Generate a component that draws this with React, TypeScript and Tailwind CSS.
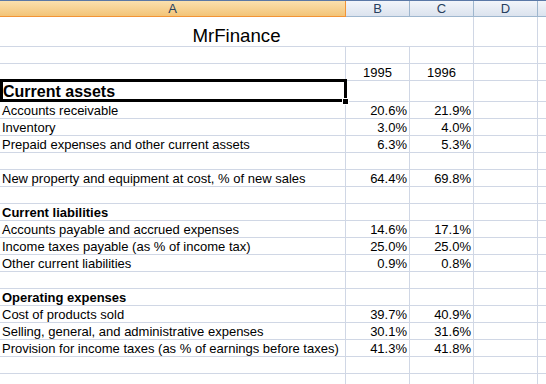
import React from "react";

type R = { a?: string; b?: string; c?: string; bold?: boolean };

const rows: R[] = [
  { a: "Accounts receivable", b: "20.6%", c: "21.9%" },
  { a: "Inventory", b: "3.0%", c: "4.0%" },
  { a: "Prepaid expenses and other current assets", b: "6.3%", c: "5.3%" },
  {},
  { a: "New property and equipment at cost, % of new sales", b: "64.4%", c: "69.8%" },
  {},
  { a: "Current liabilities", bold: true },
  { a: "Accounts payable and accrued expenses", b: "14.6%", c: "17.1%" },
  { a: "Income taxes payable (as % of income tax)", b: "25.0%", c: "25.0%" },
  { a: "Other current liabilities", b: "0.9%", c: "0.8%" },
  {},
  { a: "Operating expenses", bold: true },
  { a: "Cost of products sold", b: "39.7%", c: "40.9%" },
  { a: "Selling, general, and administrative expenses", b: "30.1%", c: "31.6%" },
  { a: "Provision for income taxes (as % of earnings before taxes)", b: "41.3%", c: "41.8%" },
  {},
  {},
];

function DataRow({ r }: { r: R }) {
  return (
    <div className="flex h-[17px] border-b border-[#d0d7e5]">
      <div className={"w-[346px] shrink-0 border-r border-[#d0d7e5] flex items-end pl-[2px] whitespace-nowrap overflow-hidden leading-[15px] " + (r.bold ? "font-bold" : "")}>
        {r.a}
      </div>
      <div className="w-[64px] shrink-0 border-r border-[#d0d7e5] flex items-end justify-end pr-[2px] leading-[15px]">{r.b}</div>
      <div className="w-[64px] shrink-0 border-r border-[#d0d7e5] flex items-end justify-end pr-[2px] leading-[15px]">{r.c}</div>
      <div className="w-[64px] shrink-0 border-r border-[#d0d7e5]" />
      <div className="flex-1" />
    </div>
  );
}

export default function App() {
  return (
    <div className="relative w-[546px] h-[384px] overflow-hidden bg-white text-black text-[13px] font-['Liberation_Sans',Arial,sans-serif]">
      {/* Column headers */}
      <div className="flex h-[17px] border-t border-[#5a78a6] text-[#27405e]">
        <div className="w-[346px] shrink-0 flex items-center justify-center border-r border-b border-[#f29436] bg-linear-to-b from-[#fae0ae] to-[#f3c477] leading-[15px]">A</div>
        <div className="w-[64px] shrink-0 flex items-center justify-center border-r border-b border-[#9eb6ce] bg-linear-to-b from-[#f2f5fa] to-[#dbe3ee] leading-[15px]">B</div>
        <div className="w-[64px] shrink-0 flex items-center justify-center border-r border-b border-[#9eb6ce] bg-linear-to-b from-[#f2f5fa] to-[#dbe3ee] leading-[15px]">C</div>
        <div className="w-[64px] shrink-0 flex items-center justify-center border-r border-b border-[#9eb6ce] bg-linear-to-b from-[#f2f5fa] to-[#dbe3ee] leading-[15px]">D</div>
        <div className="flex-1 border-b border-[#9eb6ce] bg-linear-to-b from-[#f2f5fa] to-[#dbe3ee]" />
      </div>

      {/* Title row (merged A:C) */}
      <div className="flex h-[30px] border-b border-[#d0d7e5]">
        <div className="w-[474px] shrink-0 border-r border-[#d0d7e5] flex items-end justify-center text-[18.67px] leading-[20px]">MrFinance</div>
        <div className="w-[64px] shrink-0 border-r border-[#d0d7e5]" />
        <div className="flex-1" />
      </div>

      {/* Empty row */}
      <DataRow r={{}} />

      {/* Years row */}
      <div className="flex h-[17px] border-b border-[#d0d7e5]">
        <div className="w-[346px] shrink-0 border-r border-[#d0d7e5]" />
        <div className="w-[64px] shrink-0 border-r border-[#d0d7e5] flex items-end justify-center leading-[15px]">1995</div>
        <div className="w-[64px] shrink-0 border-r border-[#d0d7e5] flex items-end justify-center leading-[15px]">1996</div>
        <div className="w-[64px] shrink-0 border-r border-[#d0d7e5]" />
        <div className="flex-1" />
      </div>

      {/* Current assets row */}
      <div className="flex h-[21px] border-b border-[#d0d7e5]">
        <div className="w-[346px] shrink-0 border-r border-[#d0d7e5] flex items-end pl-[3px] text-[16px] font-bold leading-[18px] whitespace-nowrap">Current assets</div>
        <div className="w-[64px] shrink-0 border-r border-[#d0d7e5]" />
        <div className="w-[64px] shrink-0 border-r border-[#d0d7e5]" />
        <div className="w-[64px] shrink-0 border-r border-[#d0d7e5]" />
        <div className="flex-1" />
      </div>

      {rows.map((r, i) => (
        <DataRow key={i} r={r} />
      ))}

      {/* Selection box overlay */}
      <div className="absolute left-0 top-[79px] w-[347px] h-[23px] border-[3px] border-black pointer-events-none" />
      {/* Fill handle */}
      <div className="absolute left-[342px] top-[98px] w-[7px] h-[7px] bg-white p-[1px] pointer-events-none">
        <div className="w-full h-full bg-black" />
      </div>
    </div>
  );
}
